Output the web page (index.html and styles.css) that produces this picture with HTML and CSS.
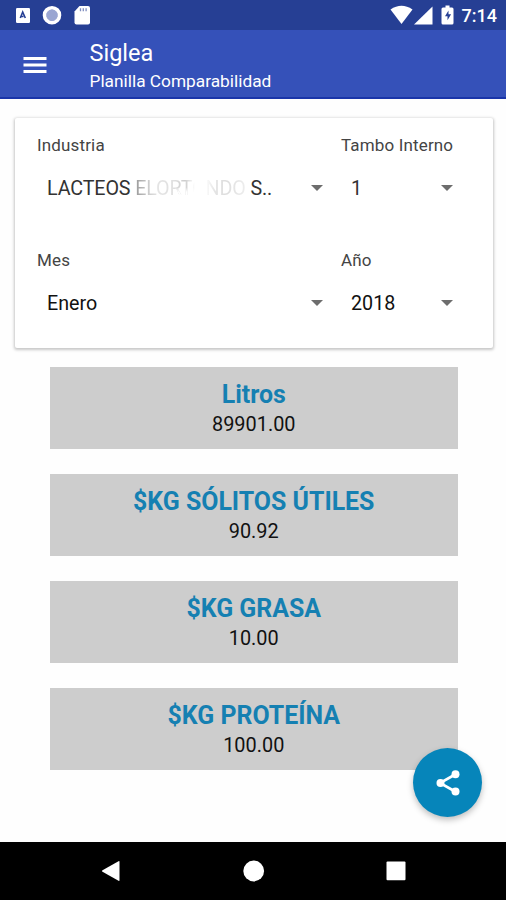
FILE: index.html
```html
<!DOCTYPE html>
<html lang="es">
<head>
<meta charset="utf-8">
<meta name="viewport" content="width=device-width, initial-scale=1">
<title>Siglea</title>
<link rel="stylesheet" href="styles.css">
</head>
<body>
<div class="status">
  <svg class="status-left" width="92" height="30" viewBox="0 0 92 30">
    <rect x="16" y="8" width="14" height="15" rx="1.2" fill="#fff"/>
    <path d="M20.300 18 22.700 12 25.300 18M21.500 16.500h2" fill="none" stroke="#263f94" stroke-width="1.6"/>
    <circle cx="52" cy="15.2" r="5.8" fill="#9aa6d2"/>
    <circle cx="52" cy="15.2" r="7.500" fill="none" stroke="#fff" stroke-width="3.600"/>
    <path d="M79.500 6H88a2 2 0 0 1 2 2v14.500a2 2 0 0 1-2 2H76.500a2 2 0 0 1-2-2V11.500z" fill="#fff"/>
    <path d="M80.500 8.300v3M83.300 8.300v3M86.100 8.300v3" stroke="#7f8dbf" stroke-width="1.300"/>
  </svg>
  <div class="status-right">
    <svg width="65" height="30" viewBox="0 0 65 30">
      <path d="M.5 9.500Q11.500 2 22.500 9.500L11.500 24z" fill="#fff"/>
      <path d="M42.500 6.500V24.500H24z" fill="#fff"/>
      <path d="M55.500 5.500h4v2h2.500a1.500 1.500 0 0 1 1.500 1.500v14a1.500 1.500 0 0 1-1.500 1.500h-9a1.500 1.500 0 0 1-1.500-1.500V9a1.500 1.500 0 0 1 1.500-1.500h2.500z" fill="#fff"/>
      <path d="M58.500 10.500 55 16.300h2.500v4l3.600-6h-2.600z" fill="#263f94"/>
    </svg>
    <span class="clock">7:14</span>
  </div>
</div>
<header class="appbar">
  <svg class="menu" width="24" height="18" viewBox="0 0 24 18"><path d="M.5 2.500h23M.5 9h23M.5 15.500h23" stroke="#fff" stroke-width="2.900"/></svg>
  <div>
    <h1 class="title">Siglea</h1>
    <p class="subtitle">Planilla Comparabilidad</p>
  </div>
</header>
<main class="content">
  <section class="filters">
    <div class="field">
      <div class="label">Industria</div>
      <div class="select"><span class="value soft company">LACTEOS <span class="faded">ELORTONDO</span> S..</span><i class="arrow"></i></div>
    </div>
    <div class="field">
      <div class="label">Tambo Interno</div>
      <div class="select"><span class="value soft">1</span><i class="arrow"></i></div>
    </div>
    <div class="field">
      <div class="label">Mes</div>
      <div class="select"><span class="value">Enero</span><i class="arrow"></i></div>
    </div>
    <div class="field">
      <div class="label">Año</div>
      <div class="select"><span class="value">2018</span><i class="arrow"></i></div>
    </div>
  </section>
  <section class="results">
    <div class="result"><h2>Litros</h2><p>89901.00</p></div>
    <div class="result"><h2>$KG SÓLITOS ÚTILES</h2><p>90.92</p></div>
    <div class="result"><h2>$KG GRASA</h2><p>10.00</p></div>
    <div class="result"><h2>$KG PROTEÍNA</h2><p>100.00</p></div>
  </section>
</main>
<button class="share" aria-label="Compartir">
  <svg width="26" height="28" viewBox="0 0 26 28"><path d="M21 5 5 14l16 9" fill="none" stroke="#fff" stroke-width="2.600"/><g fill="#fff"><circle cx="20.500" cy="5.200" r="4"/><circle cx="5.500" cy="14" r="4"/><circle cx="20.500" cy="22.600" r="4"/></g></svg>
</button>
<nav class="navbar">
  <svg width="20" height="22" viewBox="0 0 20 22"><path d="M1.500 10.200 17.500 1.200q1-.5 1 .6v18.400q0 1.100-1 .6L1.500 11.800q-1.200-.8 0-1.600z" fill="#fff"/></svg>
  <svg width="22" height="22" viewBox="0 0 22 22"><circle cx="10.700" cy="11" r="10.400" fill="#fff"/></svg>
  <svg width="20" height="22" viewBox="0 0 20 22"><rect x=".5" y="1.500" width="19" height="18.800" rx="1" fill="#fff"/></svg>
</nav>
</body>
</html>
```
FILE: styles.css
```css
* { box-sizing: border-box; }
body {
  margin: 0;
  height: 900px;
  display: flex;
  flex-direction: column;
  position: relative;
  overflow: hidden;
  background: #fefefe;
  color: #111;
  font-family: Roboto, "Liberation Sans", sans-serif;
}
h1, h2, p { margin: 0; font-weight: 400; }
svg { display: block; flex: none; }
.status {
  height: 30px;
  display: flex;
  justify-content: space-between;
  background: #263f94;
  color: #fff;
}
.status-right { display: flex; padding-right: 9px; gap: 7px; }
.clock { font-size: 18px; font-weight: 500; line-height: 32px; }
.appbar {
  height: 69px;
  display: flex;
  align-items: center;
  padding-left: 23px;
  gap: 42.500px;
  background: #3551b9;
  border-bottom: 2px solid #1a35a9;
  color: #fff;
}
.menu { margin-top: 2px; }
.title { font-size: 23.500px; line-height: 28px; padding-top: 7px; }
.subtitle { font-size: 17.300px; line-height: 28px; }
.content { flex: 1; padding: 19px 13px 0 15px; }
.filters {
  height: 230px;
  display: grid;
  grid-template-columns: 304px 130px;
  grid-template-rows: 115px 115px;
  padding-left: 22px;
  background: #fff;
  border-radius: 2px;
  box-shadow: 0 1px 3px 1px rgba(0, 0, 0, .22);
}
.label { padding-top: 15px; font-size: 17px; line-height: 24px; color: #444; letter-spacing: .15px; }
.select {
  display: flex;
  align-items: center;
  justify-content: space-between;
  height: 24px;
  margin-top: 19px;
  padding: 0 18px 0 10px;
}
.value { font-size: 19.700px; line-height: 24px; padding-top: 2px; white-space: nowrap; }
.soft { color: #333; }
.company { letter-spacing: -.12px; }
.faded {
  color: transparent;
  background:
    linear-gradient(transparent 45%, #fff 65%) 40px 0 / 32px 100% no-repeat,
    linear-gradient(90deg, #999 0, #c8c8c8 11%, #e4e4e4 20%, #e0e0e0 35%, #ccc 45%, #fff 54%, #fff 63%, #e4e4e4 72%, #ddd 82%, #eee 100%);
  background-clip: text;
  -webkit-background-clip: text;
}
.arrow { border: 6px solid transparent; border-top-color: #6d6d6d; border-bottom: 0; }
.results { padding: 18.500px 35.500px 0 35px; display: grid; gap: 25px; }
.result { height: 82px; padding-top: 13px; background: #cdcdcd; text-align: center; }
.result h2 { font-size: 24.900px; line-height: 30px; font-weight: 700; color: #1580b2; }
.result p { font-size: 19.900px; line-height: 29px; }
.share {
  position: absolute;
  left: 413px;
  top: 748px;
  width: 69px;
  height: 69px;
  padding: 0;
  display: grid;
  place-items: center;
  border: 0;
  border-radius: 50%;
  background: #0685ba;
  box-shadow: 0 3px 6px rgba(0, 0, 0, .25);
}
.navbar {
  height: 58px;
  display: flex;
  align-items: center;
  justify-content: space-between;
  padding: 0 100px 0 101px;
  background: #000;
}
```
